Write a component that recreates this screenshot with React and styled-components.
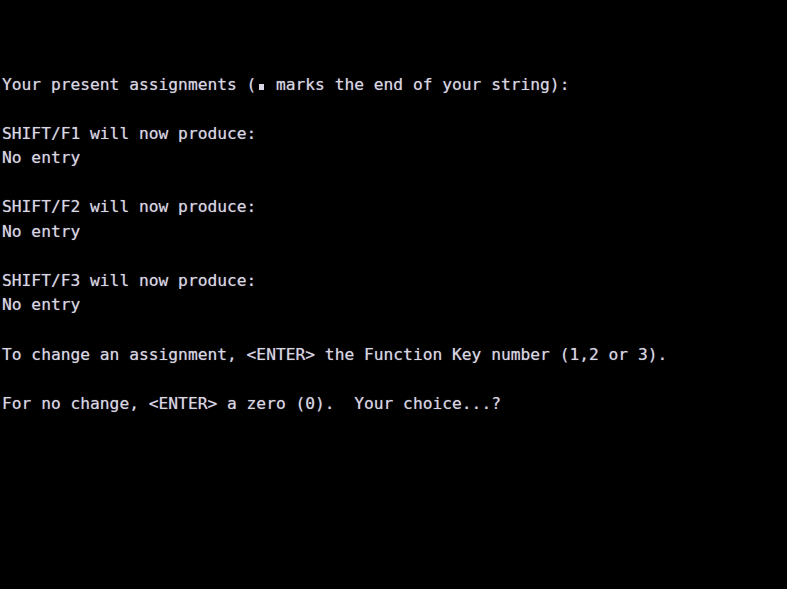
import React from 'react';
import styled, { createGlobalStyle } from 'styled-components';

const GlobalStyle = createGlobalStyle`
  html, body {
    margin: 0;
    padding: 0;
    background: #000;
  }
`;

// 24 rows of an 80 column text screen
const lines = [
  '',
  '',
  '',
  'MARKER',
  '',
  'SHIFT/F1 will now produce:',
  'No entry',
  '',
  'SHIFT/F2 will now produce:',
  'No entry',
  '',
  'SHIFT/F3 will now produce:',
  'No entry',
  '',
  'To change an assignment, <ENTER> the Function Key number (1,2 or 3).',
  '',
  'For no change, <ENTER> a zero (0).  Your choice...?',
  '',
  '',
  '',
  '',
  '',
  '',
  '',
];

const App = () => {
  return (
    <>
      <GlobalStyle />
      <Screen>
        {lines.map((line, i) => (
          <Row key={i}>
            {line === 'MARKER' ? (
              <>
                Your present assignments (<Cell><EndMark /></Cell> marks the end of your string):
              </>
            ) : (
              line
            )}
          </Row>
        ))}
      </Screen>
    </>
  );
};

export default App;

const Screen = styled.div`
  width: 787px;
  height: 589px;
  background: #000;
  display: grid;
  grid-template-rows: repeat(24, 1fr);
  overflow: hidden;
  color: #d9d6e3;
  font-family: 'DejaVu Sans Mono', 'Liberation Mono', monospace;
  font-size: 16.25px;
  text-shadow: 0 0 1px rgba(217, 214, 227, 0.55);
`;

const Row = styled.div`
  white-space: pre;
  line-height: 19px;
  padding: 1px 0 0 2px;
`;

const Cell = styled.span`
  display: inline-flex;
  width: 1ch;
  height: 12px;
  align-items: flex-end;
  justify-content: center;
  vertical-align: baseline;
`;

const EndMark = styled.span`
  display: block;
  width: 5px;
  height: 6px;
  background: #d9d6e3;
`;
